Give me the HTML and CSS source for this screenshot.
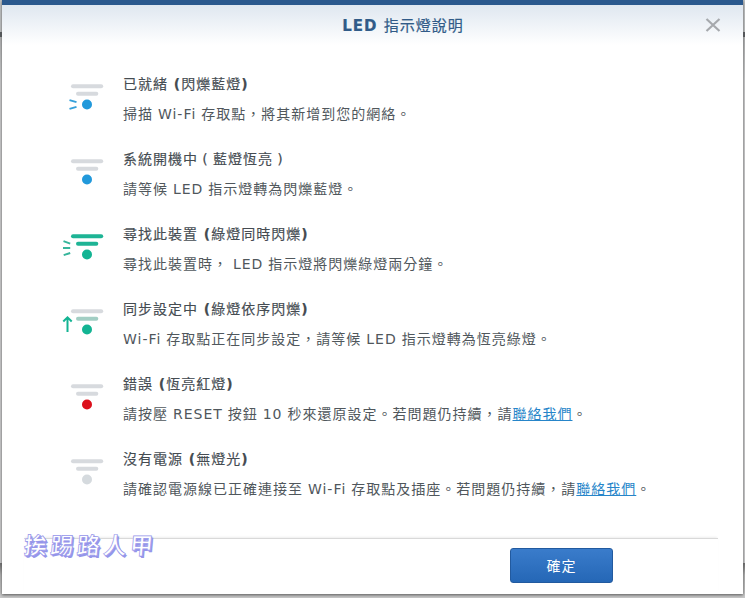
FILE: index.html
```html
<!DOCTYPE html>
<html lang="zh-Hant">
<head>
<meta charset="utf-8">
<title>LED 指示燈說明</title>
<link rel="stylesheet" href="styles.css">
</head>
<body>
<div class="dialog">
  <header class="header">
    <h1><b>LED</b> 指示燈說明</h1>
    <svg class="close" width="16" height="14" viewBox="0 0 16 14"><path d="M1.5 1L14.5 13M14.5 1L1.5 13"/></svg>
  </header>
  <main class="list">
    <section class="item">
      <svg class="icon" viewBox="0 0 44 36"><path class="bar" d="M11 6.2H39.2"/><path class="bar" d="M16 13.7H34.3"/><circle cx="25" cy="24.5" r="5" fill="#2299db"/><path class="ray blue" d="M7.5 20.1L14.5 22.2M7.5 28.9L14.5 26.8"/></svg>
      <div><h2>已就緒 <b>(</b>閃爍藍燈<b>)</b></h2><p>掃描 Wi-Fi 存取點，將其新增到您的網絡。</p></div>
    </section>
    <section class="item">
      <svg class="icon" viewBox="0 0 44 36"><path class="bar" d="M11 6.2H39.2"/><path class="bar" d="M16 13.7H34.3"/><circle cx="25" cy="24.5" r="5" fill="#2299db"/></svg>
      <div><h2>系統開機中<span class="paren">(</span>藍燈恆亮<span class="paren">)</span></h2><p>請等候 LED 指示燈轉為閃爍藍燈。</p></div>
    </section>
    <section class="item">
      <svg class="icon" viewBox="0 0 44 36"><path class="bar green" d="M11 6.2H39.2"/><path class="bar green" d="M16 13.7H34.3"/><circle cx="25" cy="24.5" r="5" fill="#13b493"/><path class="ray" d="M1.5 11.2L8.2 13.7M1 18H8.2M1.7 25.2L8.2 23"/></svg>
      <div><h2>尋找此裝置 <b>(</b>綠燈同時閃爍<b>)</b></h2><p>尋找此裝置時， LED 指示燈將閃爍綠燈兩分鐘。</p></div>
    </section>
    <section class="item">
      <svg class="icon" viewBox="0 0 44 36"><path class="bar" d="M11 6.2H39.2"/><path class="bar pale" d="M16 13.7H34.3"/><circle cx="25" cy="24.5" r="5" fill="#13b493"/><path class="arrow" d="M5.5 27V12.5M1.3 16.5L5.5 12.3L9.7 16.5"/></svg>
      <div><h2>同步設定中 <b>(</b>綠燈依序閃爍<b>)</b></h2><p>Wi-Fi 存取點正在同步設定，請等候 LED 指示燈轉為恆亮綠燈。</p></div>
    </section>
    <section class="item">
      <svg class="icon" viewBox="0 0 44 36"><path class="bar" d="M11 6.2H39.2"/><path class="bar" d="M16 13.7H34.3"/><circle cx="25" cy="24.5" r="5" fill="#dc101c"/></svg>
      <div><h2>錯誤 <b>(</b>恆亮紅燈<b>)</b></h2><p>請按壓 RESET 按鈕 10 秒來還原設定。若問題仍持續，請<a href="#">聯絡我們</a>。</p></div>
    </section>
    <section class="item">
      <svg class="icon" viewBox="0 0 44 36"><path class="bar" d="M11 6.2H39.2"/><path class="bar" d="M16 13.7H34.3"/><circle cx="25" cy="24.5" r="5" fill="#d5dade"/></svg>
      <div><h2>沒有電源 <b>(</b>無燈光<b>)</b></h2><p>請確認電源線已正確連接至 Wi-Fi 存取點及插座。若問題仍持續，請<a href="#">聯絡我們</a>。</p></div>
    </section>
  </main>
  <footer class="footer"><button>確定</button></footer>
  <div class="watermark">挨踢路人甲</div>
</div>
</body>
</html>
```
FILE: styles.css
```css
* { box-sizing: border-box; }
body {
  margin: 0;
  height: 598px;
  padding: 0 2px 4px;
  overflow: hidden;
  background: linear-gradient(#c5c7c8 0 32px, #55585c 32px 37px, #b5b6b7 37px, #d0d1d2 80px, #d0d1d2 563px, #6d6d6d 563px, #b4b4b4 575px, #c9c9c9 596px);
  font: 14px/30px "DejaVu Sans", "Noto Sans CJK TC", sans-serif;
  letter-spacing: 1px;
  word-spacing: .4px;
  color: #50575c;
}
.dialog {
  position: relative;
  height: 594px;
  border-top: 5px solid #2a588d;
  background: linear-gradient(#dfe7f0, #fff 40px);
  box-shadow: 0 1px 3px #555;
}
.header {
  position: relative;
  display: flex;
  justify-content: center;
  height: 64px;
  padding-top: 6px;
}
h1 {
  margin: 0 0 0 61px;
  font-size: 15px;
  font-weight: 400;
  line-height: 30px;
  letter-spacing: 1px;
  color: #315b88;
  -webkit-text-stroke: .2px;
}
.close {
  position: absolute;
  top: 13px;
  right: 22px;
  fill: none;
  stroke: #a6a9ad;
  stroke-width: 2.2;
}
.list { height: 469px; padding-left: 60px; }
.item { display: flex; height: 75px; }
.icon { width: 44px; height: 36px; margin: 11px 17px 0 0; }
.bar { fill: none; stroke: #d7dade; stroke-width: 4; stroke-linecap: round; }
.bar.green { stroke: #1eb495; }
.bar.pale { stroke: #a2cec4; }
.ray { fill: none; stroke: #36b59b; stroke-width: 1.9; }
.ray.blue { stroke: #35a0da; }
.arrow { fill: none; stroke: #13b493; stroke-width: 2; }
h2 {
  margin: 0;
  font-size: 14px;
  font-weight: 400;
  line-height: 30px;
  color: #454c52;
  -webkit-text-stroke: .15px;
}
.paren { display: inline-block; width: 15px; text-align: center; }
p { margin: 0; white-space: nowrap; word-spacing: -.5px; }
a { color: #2685c9; }
.footer {
  height: 56px;
  margin: 0 25px 0 22px;
  padding: 9px 0 0 486px;
  border-top: 1px solid #d9d9d9;
  box-shadow: 0 -2px 2px -1px #eee;
}
button {
  display: block;
  width: 103px;
  height: 35px;
  padding: 0;
  border: 1px solid #225a9f;
  border-radius: 3px;
  background: linear-gradient(#3a7ccb, #2567b6);
  color: #fff;
  font: inherit;
  letter-spacing: 1px;
}
.watermark {
  position: absolute;
  left: 22px;
  top: 521px;
  font: 700 23px/36px "Noto Sans CJK TC", sans-serif;
  letter-spacing: 3.5px;
  color: #fff;
  -webkit-text-stroke: .7px #9595ea;
  text-shadow: 1px 1px #9595ea, 2px 2px #9595ea;
  transform: skewX(-5deg);
}
```
